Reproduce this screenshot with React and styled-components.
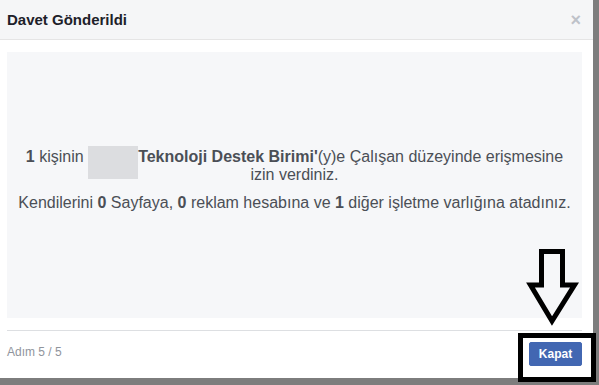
import React from 'react';
import styled, { createGlobalStyle } from 'styled-components';

const GlobalStyle = createGlobalStyle`
  html, body {
    margin: 0;
    padding: 0;
    background: #7d7d7d;
    font-family: "Liberation Sans", Arial, sans-serif;
  }
`;

const Page = styled.div`
  position: relative;
  width: 599px;
  height: 385px;
  overflow: hidden;
  background: #7d7d7d;
`;

const Dialog = styled.div`
  width: 593px;
  height: 378px;
  background: #ffffff;
  display: flex;
  flex-direction: column;
`;

const Header = styled.div`
  height: 39px;
  flex: none;
  display: flex;
  align-items: center;
  justify-content: space-between;
  padding: 0 12px 0 7px;
  background: #f5f6f7;
  border-bottom: 1px solid #e5e5e5;
`;

const Title = styled.h2`
  margin: 0;
  font-size: 15px;
  font-weight: bold;
  color: #1d2129;
`;

const Close = styled.span`
  font-size: 18px;
  line-height: 1;
  color: #bec2c9;
  font-weight: bold;
`;

const Body = styled.div`
  flex: 1;
  padding: 12px 11px 12px 7px;
  display: flex;
  flex-direction: column;
`;

const Panel = styled.div`
  flex: 1;
  background: #f6f7f9;
  display: flex;
  flex-direction: column;
  justify-content: center;
  align-items: center;
  padding: 0 8px 11px;
  text-align: center;
  color: #4b4f56;
  font-size: 16px;
  line-height: 18px;
`;

const Para = styled.p`
  margin: 0 0 10px;
  &:last-child {
    margin-bottom: 0;
  }
`;

const Redacted = styled.span`
  display: inline-block;
  width: 50px;
  height: 33px;
  margin: -2px 0 -13px;
  vertical-align: top;
  background: #dcdde0;
`;

const Footer = styled.div`
  margin: 0 11px 0 7px;
  border-top: 1px solid #dddfe2;
  height: 47px;
  flex: none;
  display: flex;
  align-items: center;
  justify-content: space-between;
`;

const Step = styled.span`
  font-size: 12px;
  color: #90949c;
  margin-top: -6px;
`;

const Button = styled.button`
  width: 53px;
  height: 24px;
  margin-top: -1px;
  border: 1px solid #4267b2;
  border-radius: 2px;
  background: #4267b2;
  color: #ffffff;
  font-family: "Liberation Sans", Arial, sans-serif;
  font-size: 12px;
  font-weight: bold;
  padding: 0;
`;

const Highlight = styled.div`
  position: absolute;
  left: 518px;
  top: 333px;
  width: 78px;
  height: 49px;
  box-sizing: border-box;
  border: 5px solid #000;
`;

const ArrowMark = styled.svg`
  position: absolute;
  left: 520px;
  top: 240px;
`;

const App = () => (
  <Page>
    <GlobalStyle />
    <Dialog>
      <Header>
        <Title>Davet Gönderildi</Title>
        <Close>×</Close>
      </Header>
      <Body>
        <Panel>
          <Para>
            <b>1</b> kişinin <Redacted />
            <b>Teknoloji Destek Birimi'</b>(y)e Çalışan düzeyinde erişmesine izin verdiniz.
          </Para>
          <Para>
            Kendilerini <b>0</b> Sayfaya, <b>0</b> reklam hesabına ve <b>1</b> diğer işletme varlığına atadınız.
          </Para>
        </Panel>
      </Body>
      <Footer>
        <Step>Adım 5 / 5</Step>
        <Button>Kapat</Button>
      </Footer>
    </Dialog>
    <ArrowMark width="66" height="90" viewBox="0 0 66 90">
      <polygon
        points="21.5,11.5 42.5,11.5 42.5,45 54.5,45 32,81 10.5,45 21.5,45"
        fill="none"
        stroke="#000"
        strokeWidth="5"
        strokeLinejoin="miter"
      />
    </ArrowMark>
    <Highlight />
  </Page>
);

export default App;
